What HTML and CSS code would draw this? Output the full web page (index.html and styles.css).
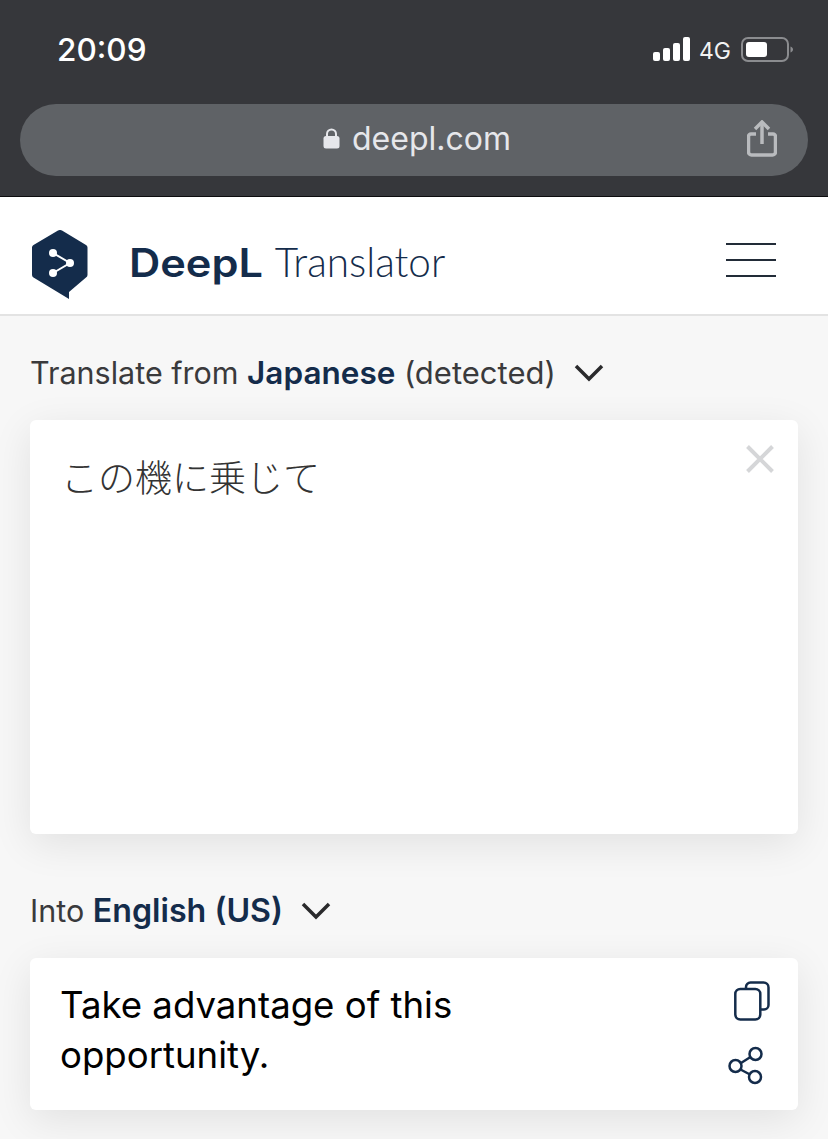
FILE: index.html
```html
<!DOCTYPE html>
<html>
<head>
  <meta charset="utf-8" />
  <title>DeepL Translator</title>
  <link rel="stylesheet" href="styles.css">
</head>
<body>

  <div class="browser">
    <div class="status">
      <span class="time">20:09</span>
      <div class="status-right">
        <svg class="signal" width="37" height="24" viewBox="0 0 37 24">
          <rect x="0" y="15" width="7" height="9" rx="2" />
          <rect x="10" y="11" width="7" height="13" rx="2" />
          <rect x="20" y="6" width="7" height="18" rx="2" />
          <rect x="30" y="0" width="7" height="24" rx="2" />
        </svg>
        <span class="network">4G</span>
        <svg class="battery" width="52" height="26" viewBox="0 0 52 26">
          <rect x="1" y="1" width="46" height="23" rx="6" fill="none" stroke="#8b8c8f" stroke-width="2" />
          <rect x="5" y="5" width="21" height="15" rx="3" fill="#fff" />
          <path d="M49.5 9.5c1.500 .5 2.500 1.800 2.500 3s-1 2.500-2.500 3z" fill="#8b8c8f" />
        </svg>
      </div>
    </div>
    <div class="urlbar">
      <svg class="lock" width="17" height="21" viewBox="0 0 17 21">
        <path d="M4 9V6a4.500 4.500 0 0 1 9 0v3" fill="none" stroke="#e6e7eb" stroke-width="2" />
        <rect x="0.500" y="8" width="16" height="12.500" rx="2.500" fill="#e6e7eb" />
      </svg>
      <span class="url">deepl.com</span>
      <svg class="share" width="30" height="37" viewBox="0 0 30 37" fill="none" stroke="#b9bbbe" stroke-width="3.500">
        <path d="M9 14H4a2.500 2.500 0 0 0-2.500 2.500v15.500A3 3 0 0 0 4.500 35h21a3 3 0 0 0 3-3V16.500A2.500 2.500 0 0 0 26 14h-5" stroke-linejoin="round" />
        <path d="M15 24V3" />
        <path d="M8 9l7-7 7 7" />
      </svg>
    </div>
  </div>

  <header class="topnav">
    <svg class="logo" width="58" height="71" viewBox="0 0 58 71">
      <path d="M29 1a3 3 0 0 1 2 .5L55 16a3 3 0 0 1 1.500 2.500v27.500a3 3 0 0 1-1.500 2.500L38 63v7L2.500 48.500A3 3 0 0 1 1 46V18.500A3 3 0 0 1 2.500 16L27 1.500a3 3 0 0 1 2-.5z" fill="#142c4b" />
      <path d="M22 24L39 34L22 44" fill="none" stroke="#fff" stroke-width="2" />
      <circle cx="22" cy="24" r="4" fill="#fff" />
      <circle cx="39" cy="34" r="4" fill="#fff" />
      <circle cx="22" cy="44" r="4" fill="#fff" />
    </svg>
    <div class="brand"><b>DeepL</b><span>Translator</span></div>
    <div class="burger"><i></i><i></i><i></i></div>
  </header>

  <main class="content">
    <div class="label from-label">
      <span>Translate from <b>Japanese</b> <span class="hint">(detected)</span></span>
      <svg class="chevron" width="30" height="18" viewBox="0 0 30 18"><path d="M2 2l13 13L28 2" /></svg>
    </div>
    <section class="card source">
      <div class="source-text">この機に乗じて</div>
      <svg class="close" width="28" height="28" viewBox="0 0 28 28"><path d="M1.500 1.500l25 25M26.500 1.500l-25 25" /></svg>
    </section>

    <div class="label into-label">
      <span>Into <b class="target-lang">English (US)</b></span>
      <svg class="chevron" width="30" height="18" viewBox="0 0 30 18"><path d="M2 2l13 13L28 2" /></svg>
    </div>
    <section class="card target">
      <div class="target-text">Take advantage of this<br>opportunity.</div>
      <div class="target-tools">
        <svg class="copy" width="36" height="40" viewBox="0 0 36 40" fill="none" stroke="#142c4b" stroke-width="2.500">
          <rect x="1.300" y="8" width="25" height="30.500" rx="5" />
          <path d="M12 8V6a4.500 4.500 0 0 1 4.500-4.500h13A5 5 0 0 1 34.500 6.500V24a4.500 4.500 0 0 1-4.500 4.500h-3.500" />
        </svg>
        <svg class="send" width="36" height="40" viewBox="0 0 36 40" fill="none" stroke="#142c4b" stroke-width="2.500">
          <circle cx="7.500" cy="20" r="6" />
          <circle cx="27.500" cy="8" r="6" />
          <circle cx="27" cy="31" r="6" />
          <path d="M13 17l9.500-6M12.500 23.500l9.500 5" />
        </svg>
      </div>
    </section>
  </main>

</body>
</html>
```

FILE: styles.css
```css
html, body
{
  margin: 0;
  padding: 0;
}

body
{
  width: 828px;
  height: 1139px;
  overflow: hidden;
  background-color: #f7f7f7;
  font-family: Inter, 'Liberation Sans', 'Noto Sans CJK JP', sans-serif;
}

.browser
{
  height: 196px;
  background-color: #36373b;
  border-bottom: 1px solid #0d0d0f;
  padding: 0 20px;
}

.status
{
  height: 104px;
  display: flex;
  justify-content: space-between;
  padding: 0 15px 0 37px;
}

.time
{
  margin-top: 30px;
  font-size: 31.500px;
  line-height: 40px;
  font-weight: 500;
  color: #fff;
}

.status-right
{
  display: flex;
  align-items: flex-start;
  padding-top: 37px;
}

.network
{
  margin: 0 0 0 9px;
  font-size: 23px;
  line-height: 28px;
  color: #f2f2f2;
}

.signal
{
  fill: #fff;
}

.battery
{
  margin: 0 0 0 10px;
}

.urlbar
{
  position: relative;
  height: 72px;
  padding-left: 6px;
  border-radius: 36px;
  background-color: #5f6266;
  display: flex;
  align-items: center;
  justify-content: center;
}

.lock
{
  margin: -4px 12px 0 0;
}

.url
{
  margin-top: -4px;
  font-size: 32px;
  color: #e6e7eb;
}

.share
{
  position: absolute;
  right: 31px;
  top: 16px;
}

.topnav
{
  height: 109px;
  padding: 8px 52px 0 31px;
  background-color: #fff;
  border-bottom: 2px solid #e3e3e3;
  display: flex;
  align-items: center;
}

.logo
{
  margin: 10px 0 0 0;
}

.brand
{
  margin: 4px 0 0 40px;
  flex: 1;
  font-size: 40.500px;
  color: #142c4b;
}

.brand b
{
  display: inline-block;
  transform: scaleX(1.110);
  transform-origin: left;
  font-family: Inter, sans-serif;
  font-weight: 600;
  font-size: 39px;
}

.brand span
{
  margin-left: 25px;
  font-family: Lato, sans-serif;
  font-weight: 300;
}

.burger i
{
  display: block;
  width: 50px;
  height: 2px;
  background-color: #222c38;
  margin: 14px 0;
}

.content
{
  padding: 0 30px;
}

.label
{
  display: flex;
  align-items: center;
  font-size: 30.500px;
  line-height: 40px;
  color: #3a3a3c;
}

.label b
{
  color: #142c4b;
  font-size: 31.500px;
  font-weight: 600;
}

.label .target-lang
{
  font-size: 32.200px;
}

.hint
{
  font-size: 31px;
}

.chevron
{
  margin-left: 18px;
  fill: none;
  stroke: #2a2a2c;
  stroke-width: 3.500;
}

.from-label
{
  padding-top: 37px;
}

.into-label
{
  padding-top: 57px;
}

.card
{
  position: relative;
  background-color: #fff;
  border-radius: 6px;
  box-shadow: 0 10px 40px rgba(0, 0, 0, 0.09);
}

.source
{
  margin-top: 27px;
  height: 414px;
}

.source-text
{
  padding: 32px 31px 0;
  font-family: 'Noto Sans CJK JP', sans-serif;
  font-weight: 300;
  font-size: 37px;
  line-height: 48px;
  color: #333;
}

.close
{
  position: absolute;
  right: 24px;
  top: 25px;
  fill: none;
  stroke: #d5d6d8;
  stroke-width: 4;
}

.target
{
  margin-top: 27px;
  height: 152px;
  display: flex;
  justify-content: space-between;
}

.target-text
{
  padding: 22px 0 0 30px;
  font-size: 36.600px;
  line-height: 50px;
  color: #000;
}

.target-tools
{
  display: flex;
  flex-direction: column;
  align-items: flex-end;
  gap: 25px;
  padding: 23px 28px 0 0;
}

.send
{
  margin-right: 6px;
}
```
